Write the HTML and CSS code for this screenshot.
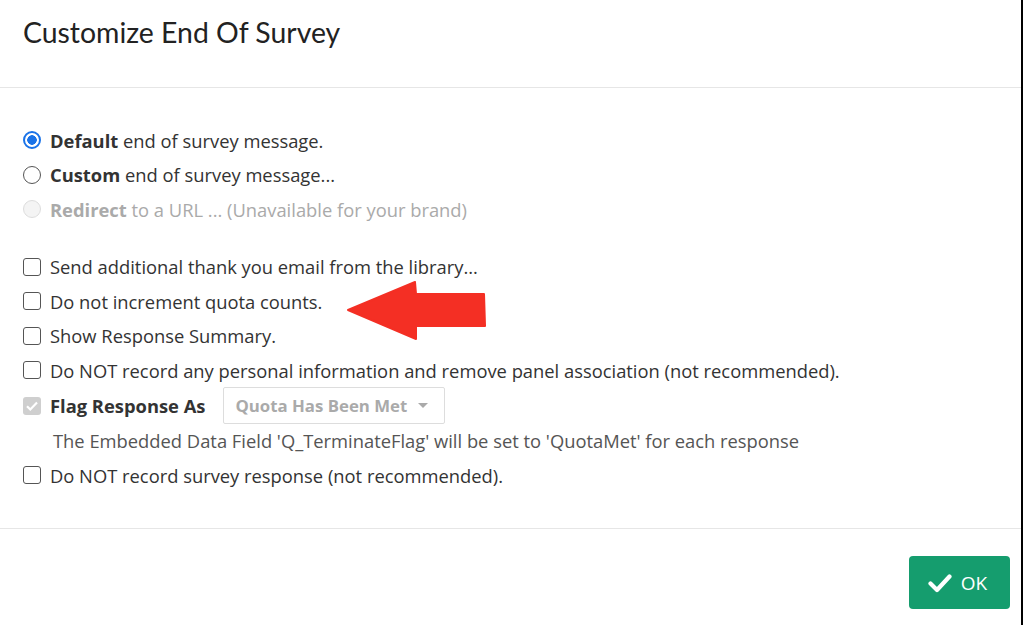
FILE: index.html
```html
<!DOCTYPE html>
<html>
<head>
<meta charset="utf-8">
<link rel="stylesheet" href="styles.css">
</head>
<body>
<div class="dialog">
  <header class="head">
    <h1 class="title">Customize End Of Survey</h1>
  </header>
  <main class="body">
    <div class="group">
      <label class="row"><span class="radio on"></span><span><b>Default</b> end of survey message.</span></label>
      <label class="row"><span class="radio"></span><span><b>Custom</b> end of survey message...</span></label>
      <label class="row disabled"><span class="radio dis"></span><span><b>Redirect</b> to a URL ... (Unavailable for your brand)</span></label>
    </div>
    <div class="group second">
      <label class="row"><span class="check"></span><span>Send additional thank you email from the library...</span></label>
      <label class="row"><span class="check"></span><span>Do not increment quota counts.</span></label>
      <label class="row"><span class="check"></span><span>Show Response Summary.</span></label>
      <label class="row"><span class="check"></span><span>Do NOT record any personal information and remove panel association (not recommended).</span></label>
      <div class="row flag">
        <span class="check dischecked"><svg viewBox="0 0 18 18" width="18" height="18"><path d="M4 9.2l3.3 3.3L14 5.6" fill="none" stroke="#fff" stroke-width="2.2"/></svg></span>
        <b class="flaglabel">Flag Response As</b>
        <span class="select">Quota Has Been Met<span class="caret"></span></span>
      </div>
      <div class="row note">The Embedded Data Field 'Q_TerminateFlag' will be set to 'QuotaMet' for each response</div>
      <label class="row"><span class="check"></span><span>Do NOT record survey response (not recommended).</span></label>
    </div>
    <svg class="arrow" width="140" height="60" viewBox="0 0 140 60">
      <path d="M1 29 L68 1 L69 13 L137 13 L138 45 L69 45 L69 58 Z" fill="#f42f24" stroke="#f42f24" stroke-width="2" stroke-linejoin="round"/>
    </svg>
  </main>
  <footer class="foot">
    <button class="ok"><svg width="24" height="20" viewBox="0 0 24 20"><path d="M2.5 10.5l6.5 6.5L21.5 3.5" fill="none" stroke="#fff" stroke-width="4.2" stroke-linecap="round" stroke-linejoin="round"/></svg>OK</button>
  </footer>
</div>
</body>
</html>
```

FILE: styles.css
```css
html, body {
  margin: 0;
  padding: 0;
  background: #000;
}
body {
  width: 1023px;
  height: 625px;
  overflow: hidden;
  font-family: "Open Sans", "Liberation Sans", sans-serif;
  color: #333;
}
.dialog {
  width: 1021px;
  height: 625px;
  background: #fff;
  display: flex;
  flex-direction: column;
}
.head {
  height: 87px;
  border-bottom: 1px solid #e6e6e6;
  box-sizing: content-box;
  padding: 0 23px;
}
.title {
  margin: 0;
  padding-top: 14px;
  font-family: "Lato", "Open Sans", sans-serif;
  font-weight: 400;
  font-size: 28.4px;
  line-height: 36px;
  color: #222;
}
.body {
  position: relative;
  height: 441px;
  border-bottom: 1px solid #e6e6e6;
  padding: 35px 23px 0;
  box-sizing: border-box;
}
.group {
  display: flex;
  flex-direction: column;
}
.second {
  margin-top: 23px;
}
.row {
  display: flex;
  align-items: center;
  gap: 9px;
  height: 34.5px;
  font-size: 18.35px;
  color: #333;
}
.row b {
  font-weight: 700;
}
.disabled {
  color: #aaa;
}
.radio {
  width: 18px;
  height: 18px;
  border-radius: 50%;
  border: 1.5px solid #555;
  box-sizing: border-box;
  flex: none;
}
.radio.on {
  border: 2px solid #1a73e8;
  background: radial-gradient(circle, #1a73e8 0 4.5px, #fff 5px);
}
.radio.dis {
  border-color: #ddd;
  background: #f4f4f4;
}
.check {
  width: 18px;
  height: 18px;
  border: 1.5px solid #555;
  border-radius: 3px;
  box-sizing: border-box;
  flex: none;
  background: #fff;
}
.check.dischecked {
  border: none;
  background: #cfcfcf;
  display: flex;
}
.flag {
  height: 36px;
}
.flaglabel {
  margin-right: 9px;
}
.select {
  display: inline-flex;
  align-items: center;
  height: 37px;
  width: 222px;
  box-sizing: border-box;
  border: 1px solid #ddd;
  border-radius: 2px;
  padding: 0 11px;
  font-size: 16.8px;
  font-weight: 700;
  color: #aaa;
}
.caret {
  margin-left: 11px;
  width: 0;
  height: 0;
  border-left: 5px solid transparent;
  border-right: 5px solid transparent;
  border-top: 5px solid #aaa;
}
.note {
  padding-left: 30px;
  color: #555;
}
.arrow {
  position: absolute;
  left: 347px;
  top: 193px;
}
.foot {
  flex: 1;
  display: flex;
  justify-content: flex-end;
  align-items: flex-start;
  padding: 27px 11px 0 0;
}
.ok {
  width: 101px;
  height: 53px;
  border: none;
  border-radius: 4px;
  background: #159d6e;
  color: #fff;
  font-family: "Open Sans", "Liberation Sans", sans-serif;
  font-size: 19px;
  display: flex;
  align-items: center;
  justify-content: center;
  gap: 9px;
  padding: 0 4px 0 0;
}
```
